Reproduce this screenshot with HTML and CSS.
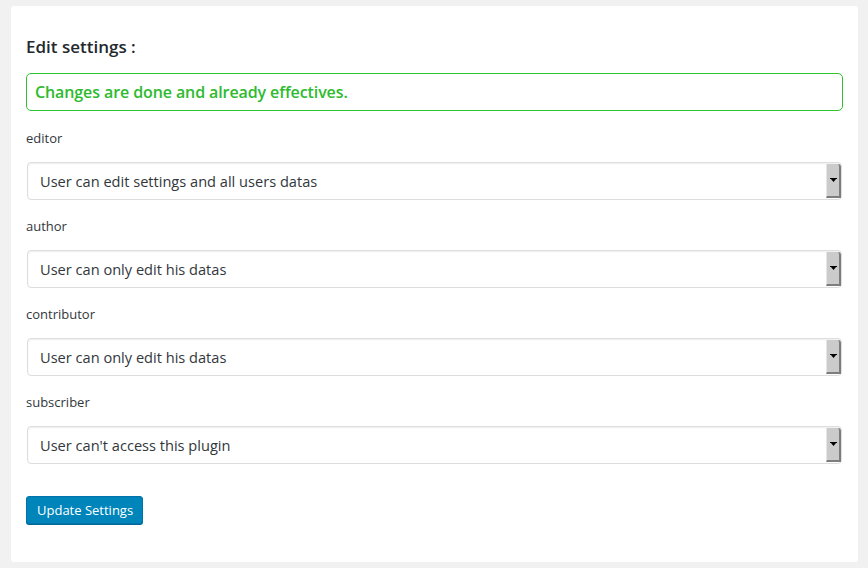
FILE: index.html
```html
<!DOCTYPE html>
<html>
<head>
<meta charset="utf-8">
<link rel="stylesheet" href="styles.css">
</head>
<body>
<div class="wrap">
  <div class="panel">
    <h3 class="title">Edit settings :</h3>
    <div class="notice">Changes are done and already effectives.</div>
    <form class="form">
      <div class="field">
        <div class="label">editor</div>
        <div class="select"><span class="value">User can edit settings and all users datas</span><span class="arrow"><svg width="7" height="5" viewBox="0 0 7 5"><path d="M0 0h7v1h-1l-2.5 3l-2.5-3h-1z" fill="#000"/></svg></span></div>
      </div>
      <div class="field">
        <div class="label">author</div>
        <div class="select"><span class="value">User can only edit his datas</span><span class="arrow"><svg width="7" height="5" viewBox="0 0 7 5"><path d="M0 0h7v1h-1l-2.5 3l-2.5-3h-1z" fill="#000"/></svg></span></div>
      </div>
      <div class="field">
        <div class="label">contributor</div>
        <div class="select"><span class="value">User can only edit his datas</span><span class="arrow"><svg width="7" height="5" viewBox="0 0 7 5"><path d="M0 0h7v1h-1l-2.5 3l-2.5-3h-1z" fill="#000"/></svg></span></div>
      </div>
      <div class="field">
        <div class="label">subscriber</div>
        <div class="select"><span class="value">User can't access this plugin</span><span class="arrow"><svg width="7" height="5" viewBox="0 0 7 5"><path d="M0 0h7v1h-1l-2.5 3l-2.5-3h-1z" fill="#000"/></svg></span></div>
      </div>
      <div class="actions"><button type="button" class="btn">Update Settings</button></div>
    </form>
  </div>
</div>
</body>
</html>
```
FILE: styles.css
```css
html, body {
  margin: 0;
  padding: 0;
  background: #f1f1f1;
  font-family: "Open Sans", "Liberation Sans", sans-serif;
  color: #333;
}
.wrap {
  padding: 6px 10px 6px 11px;
}
.panel {
  background: #fff;
  border-radius: 3px;
  padding: 30px 15px 38px 15px;
  height: 556px;
  box-sizing: border-box;
}
.title {
  margin: 0;
  font-size: 17px;
  font-weight: 600;
  line-height: 22px;
  color: #23282d;
}
.notice {
  margin-top: 15px;
  margin-bottom: 1px;
  border: 1px solid #2ec42e;
  border-radius: 5px;
  height: 38px;
  box-sizing: border-box;
  padding: 0 8px;
  display: flex;
  align-items: center;
  font-size: 16px;
  font-weight: 600;
  letter-spacing: -0.1px;
  color: #2eba2e;
}
.form {
  margin: 0;
}
.field {
  display: flex;
  flex-direction: column;
}
.label {
  margin-top: 18px;
  font-size: 13px;
  line-height: 17px;
  color: #32373c;
}
.select {
  margin-top: 15px;
  margin-left: 1px;
  margin-right: 1px;
  height: 38px;
  box-sizing: border-box;
  border: 1px solid #ddd;
  border-radius: 4px;
  box-shadow: inset 0 1px 2px rgba(0,0,0,0.07);
  display: flex;
  align-items: stretch;
  padding: 1px 0 1px 12px;
}
.value {
  flex: 1;
  display: flex;
  align-items: center;
  font-size: 14.6px;
  color: #32373c;
}
.arrow {
  width: 12px;
  background: #cbcbcb;
  border-right: 2px solid #7d7d7d;
  border-bottom: 2px solid #7d7d7d;
  border-left: 1px solid #e6e6e6;
  border-top-right-radius: 3px;
  display: flex;
  align-items: center;
  justify-content: center;
}
.actions {
  margin-top: 32px;
}
.btn {
  font-family: "Open Sans", "Liberation Sans", sans-serif;
  font-size: 13px;
  color: #fff;
  background: #0085ba;
  border: 1px solid #0073aa;
  border-radius: 3px;
  box-shadow: 0 1px 0 #006799;
  height: 28px;
  padding: 0 9px 0 10px;
  line-height: 26px;
  cursor: pointer;
}
```
